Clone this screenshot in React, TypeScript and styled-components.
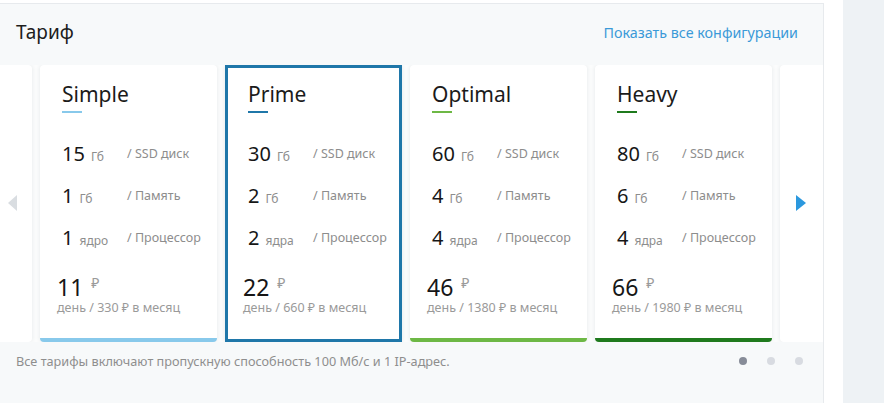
import styled, { createGlobalStyle } from "styled-components";

const GlobalStyle = createGlobalStyle`
  html, body {
    margin: 0;
    padding: 0;
    background: #ffffff;
    font-family: "Noto Sans", "Open Sans", sans-serif;
    color: #1c1c1c;
  }
  * { box-sizing: border-box; }
`;

const Page = styled.div`
  display: flex;
  height: 403px;
  overflow: hidden;
`;

const Panel = styled.section`
  width: 824px;
  margin-top: 3px;
  background: #f7f9fa;
  border-top: 1px solid #e7eaed;
  border-right: 1px solid #e7eaed;
  display: flex;
  flex-direction: column;
`;

const Spacer = styled.div`
  width: 19px;
`;

const Sidebar = styled.aside`
  flex: 1;
  background: #eef2f5;
`;

const Header = styled.header`
  height: 61px;
  display: flex;
  align-items: center;
  justify-content: space-between;
  padding: 0 25px 5px 16px;
`;

const Title = styled.h2`
  margin: 0;
  font-size: 19px;
  font-weight: 400;
  color: #1d1d1d;
`;

const ShowAll = styled.a`
  font-size: 14.3px;
  color: #3b9ad8;
  text-decoration: none;
  cursor: pointer;
`;

const Viewport = styled.div`
  position: relative;
  height: 277px;
  overflow: hidden;
  background: #fbfcfc;
`;

const Track = styled.div`
  display: flex;
  gap: 8px;
  margin-left: -145px;
  height: 100%;
`;

const Card = styled.div<{ $accent: string; $selected?: boolean }>`
  flex: 0 0 177px;
  min-width: 0;
  height: 100%;
  overflow: hidden;
  background: #ffffff;
  border-radius: 4px;
  box-shadow: 0 0 4px rgba(40, 60, 80, 0.1);
  border-bottom: 4px solid ${p => p.$accent};
  padding: 17px 0 0 22px;
  ${p =>
    p.$selected &&
    `
    border: 3px solid ${p.$accent};
    border-radius: 0;
    padding: 14px 0 0 20px;
  `}
`;

const Name = styled.div`
  font-size: 21px;
  line-height: 24px;
  color: #1b1b1b;
`;

const Underline = styled.div<{ $accent: string }>`
  width: 20px;
  height: 2px;
  margin-top: 5px;
  background: ${p => p.$accent};
`;

const Specs = styled.div`
  margin-top: 19px;
`;

const SpecRow = styled.div`
  height: 42px;
  display: flex;
  align-items: center;
  white-space: nowrap;
`;

const Amount = styled.div`
  width: 65px;
  flex: none;
  display: flex;
  align-items: baseline;
`;

const Num = styled.span`
  font-size: 20px;
  color: #161616;
`;

const Unit = styled.span`
  font-size: 12px;
  color: #8d8d8d;
  margin-left: 6px;
`;

const Label = styled.span`
  font-size: 12.5px;
  color: #8d8d8d;
`;

const Price = styled.div`
  margin: 17px 0 0 -5px;
`;

const PriceMain = styled.div`
  display: flex;
  align-items: flex-start;
  font-size: 23px;
  line-height: 25px;
  color: #161616;
`;

const Ruble = styled.span`
  font-size: 14px;
  line-height: 16px;
  color: #9a9a9a;
  margin-left: 8px;
`;

const PriceSub = styled.div`
  font-size: 12.5px;
  line-height: 16px;
  color: #9a9a9a;
  white-space: nowrap;
`;

const Arrow = styled.div<{ $side: "left" | "right" }>`
  position: absolute;
  top: 130px;
  ${p => (p.$side === "left" ? "left: 8px;" : "left: 796px;")}
  width: 0;
  height: 0;
  border-top: 8px solid transparent;
  border-bottom: 8px solid transparent;
  ${p =>
    p.$side === "left"
      ? "border-right: 9px solid #d9dde1;"
      : "border-left: 10px solid #2b98de;"}
`;

const Footer = styled.footer`
  display: flex;
  align-items: center;
  justify-content: space-between;
  padding: 10px 20px 0 16px;
`;

const Note = styled.p`
  margin: 0;
  font-size: 12.7px;
  color: #8e8e8e;
`;

const Dots = styled.div`
  display: flex;
  gap: 20px;
`;

const Dot = styled.span<{ $active?: boolean }>`
  width: 8px;
  height: 8px;
  border-radius: 50%;
  background: ${p => (p.$active ? "#878c98" : "#d8dbe1")};
`;

interface Plan {
  name: string;
  accent: string;
  disk: number;
  ram: number;
  cpu: number;
  cpuUnit: string;
  day: number;
  selected?: boolean;
}

const plans: Plan[] = [
  { name: "Simple", accent: "#88c9eb", disk: 15, ram: 1, cpu: 1, cpuUnit: "ядро", day: 11 },
  { name: "Prime", accent: "#1f77a9", disk: 30, ram: 2, cpu: 2, cpuUnit: "ядра", day: 22, selected: true },
  { name: "Optimal", accent: "#6db845", disk: 60, ram: 4, cpu: 4, cpuUnit: "ядра", day: 46 },
  { name: "Heavy", accent: "#1f7a1d", disk: 80, ram: 6, cpu: 4, cpuUnit: "ядра", day: 66 },
];

export default function App() {
  return (
    <>
      <GlobalStyle />
      <Page>
        <Panel>
          <Header>
            <Title>Тариф</Title>
            <ShowAll>Показать все конфигурации</ShowAll>
          </Header>
          <Viewport>
            <Track>
              <Card $accent="transparent" />
              {plans.map(plan => (
                <Card key={plan.name} $accent={plan.accent} $selected={plan.selected}>
                  <Name>{plan.name}</Name>
                  <Underline $accent={plan.accent} />
                  <Specs>
                    <SpecRow>
                      <Amount>
                        <Num>{plan.disk}</Num>
                        <Unit>Гб</Unit>
                      </Amount>
                      <Label>/ SSD диск</Label>
                    </SpecRow>
                    <SpecRow>
                      <Amount>
                        <Num>{plan.ram}</Num>
                        <Unit>Гб</Unit>
                      </Amount>
                      <Label>/ Память</Label>
                    </SpecRow>
                    <SpecRow>
                      <Amount>
                        <Num>{plan.cpu}</Num>
                        <Unit>{plan.cpuUnit}</Unit>
                      </Amount>
                      <Label>/ Процессор</Label>
                    </SpecRow>
                  </Specs>
                  <Price>
                    <PriceMain>
                      {plan.day}
                      <Ruble>₽</Ruble>
                    </PriceMain>
                    <PriceSub>день / {plan.day * 30} ₽ в месяц</PriceSub>
                  </Price>
                </Card>
              ))}
              <Card $accent="transparent" />
            </Track>
            <Arrow $side="left" />
            <Arrow $side="right" />
          </Viewport>
          <Footer>
            <Note>Все тарифы включают пропускную способность 100 Мб/с и 1 IP-адрес.</Note>
            <Dots>
              <Dot $active />
              <Dot />
              <Dot />
            </Dots>
          </Footer>
        </Panel>
        <Spacer />
        <Sidebar />
      </Page>
    </>
  );
}
